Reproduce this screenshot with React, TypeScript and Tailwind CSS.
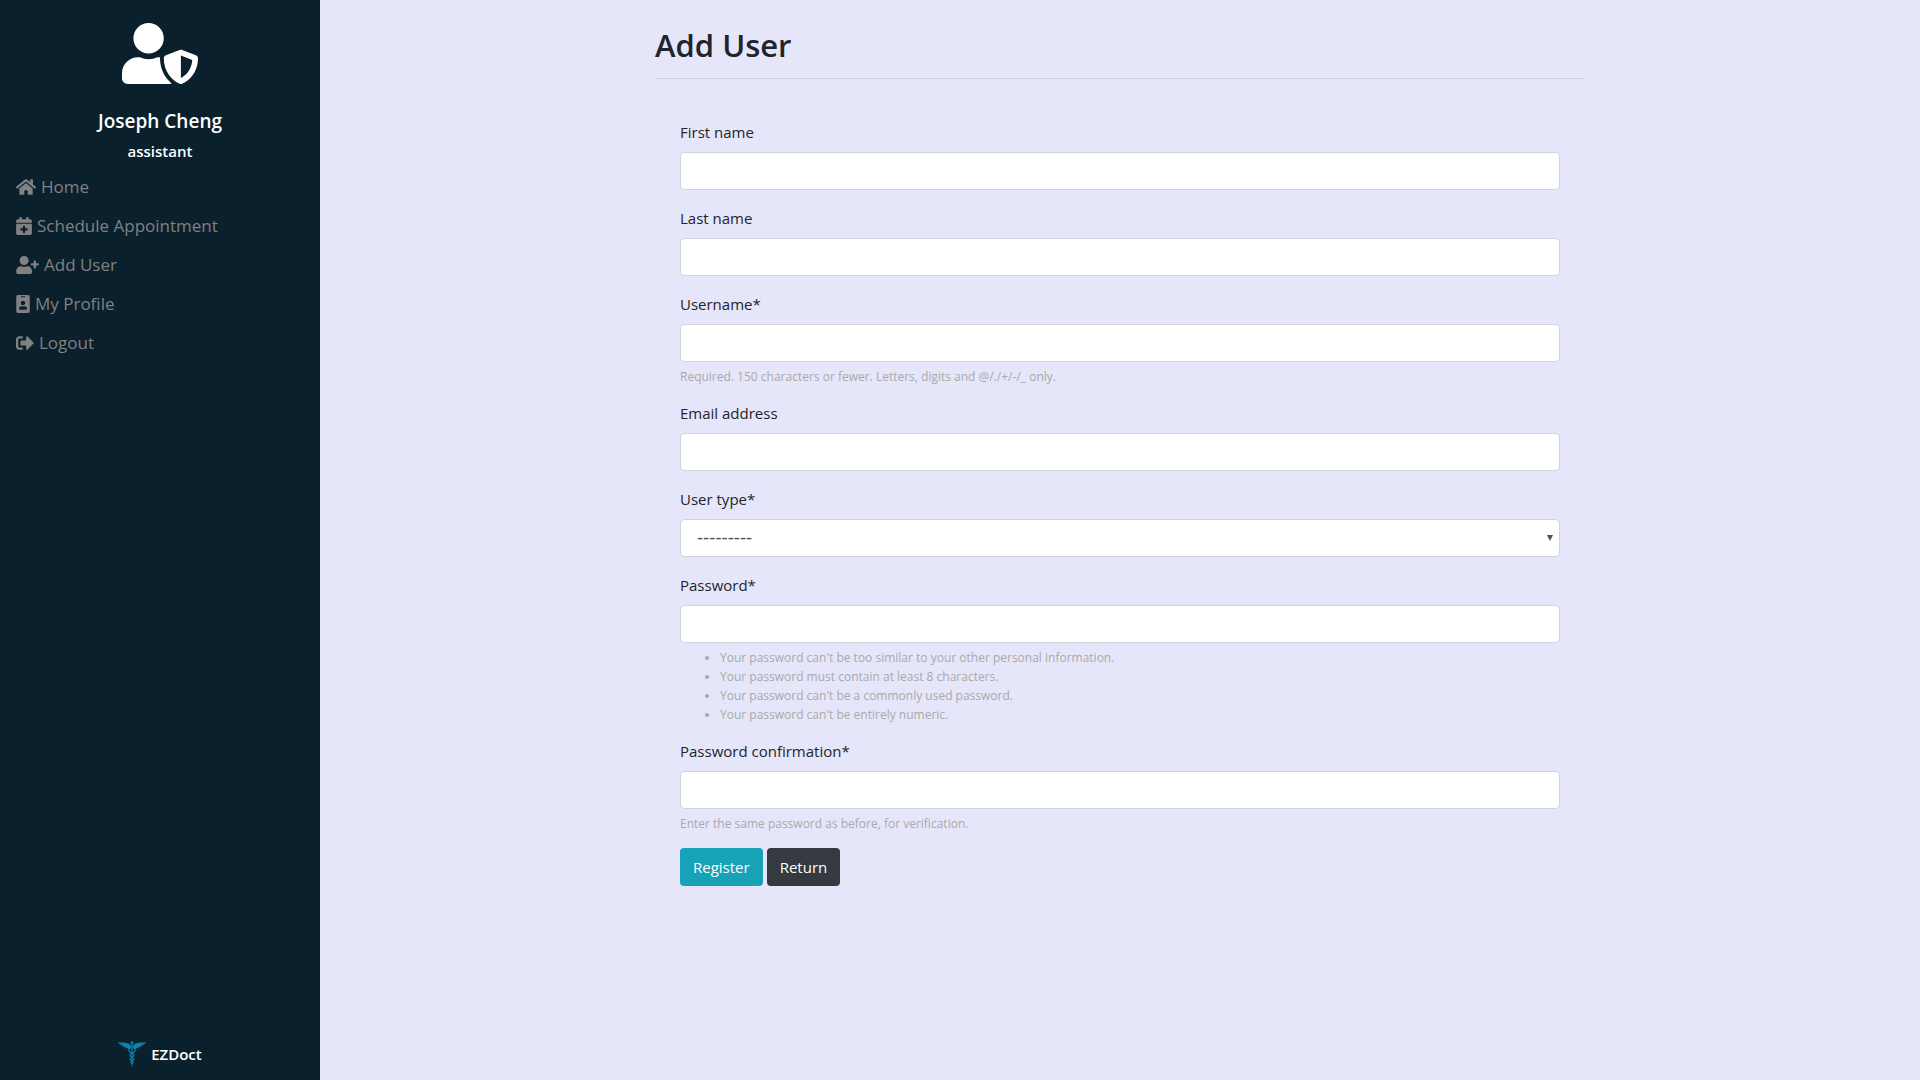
import React from "react";
import { FaUserShield, FaHome, FaCalendarPlus, FaUserPlus, FaIdBadge, FaSignOutAlt } from "react-icons/fa";

const navItems = [
  { label: "Home", icon: <FaHome className="h-[18px] w-[20px]" /> },
  { label: "Schedule Appointment", icon: <FaCalendarPlus className="h-[18px] w-[16px]" /> },
  { label: "Add User", icon: <FaUserPlus className="h-[18px] w-[23px]" /> },
  { label: "My Profile", icon: <FaIdBadge className="h-[18px] w-[14px]" /> },
  { label: "Logout", icon: <FaSignOutAlt className="h-[18px] w-[18px]" /> },
];

const control = "block h-[38px] w-full rounded border border-[#ced4da] bg-white";

function Caduceus() {
  return (
    <svg viewBox="0 0 28 26" className="h-[26px] w-7" aria-hidden="true">
      <g fill="#1380b0">
        <circle cx="14" cy="1.6" r="1.4" />
        <path d="M13.3 2h1.4l-.3 23.4h-.8z" />
        <path d="M0 1.2c4 .2 8 .3 10.600 1.300 1.500.6 2 1.700 2.600 2.700l-.5 2.300c-1 .6-2 .7-3.200.5l.2-.9-2.200.1.2-1-2.300-.2.300-.9-2.200-.4.300-.8C2 3.400 1 2.500 0 1.200z" />
        <path d="M28 1.200c-4 .2-8 .3-10.600 1.300-1.500.6-2 1.700-2.600 2.700l.5 2.300c1 .6 2 .7 3.200.5l-.2-.9 2.200.1-.2-1 2.300-.2-.3-.9 2.200-.4-.3-.8C26 3.400 27 2.500 28 1.200z" />
      </g>
      <g fill="none" stroke="#1380b0" strokeWidth="1.200">
        <path d="M11.500 7.500c-2 2.500.5 3.700 2.500 4.700s3.500 2.300 0 4.300-1.800 2.700 0 3.700 1 1.800 0 2.300" />
        <path d="M16.500 7.500c2 2.500-.5 3.700-2.500 4.700s-3.500 2.300 0 4.300 1.800 2.700 0 3.700-1 1.800 0 2.300" />
      </g>
    </svg>
  );
}

function Field({ id, label, help, children }: { id: string; label: string; help?: React.ReactNode; children?: React.ReactNode }) {
  return (
    <div className="mb-4">
      <label htmlFor={id} className="mb-2 block text-[15px] leading-6">{label}</label>
      {children ?? <input id={id} type={id.startsWith("password") ? "password" : "text"} className={`${control} px-3 text-[15px] text-[#495057]`} />}
      {help && <div className="pt-[5px] text-xs leading-[19px] text-[#a9a9a9] -mb-px">{help}</div>}
    </div>
  );
}

export default function App() {
  return (
    <div className="flex min-h-screen bg-[#e6e6fa] font-['Open_Sans',sans-serif] text-[#212529]">
      <aside className="flex w-1/6 shrink-0 flex-col bg-[#0a202d]">
        <div className="flex flex-col items-center pt-[23px] text-white">
          <FaUserShield className="h-[61px] w-[76px]" />
          <h2 className="mt-[25px] text-[19px] leading-6 font-semibold">Joseph Cheng</h2>
          <h3 className="mt-2 text-[15px] leading-5 font-semibold">assistant</h3>
        </div>
        <nav className="mt-3 flex flex-col gap-3 px-4">
          {navItems.map((item) => (
            <a key={item.label} href="#" className="flex items-center gap-[5px] text-[17px] leading-[27px] text-[#818181]">
              {item.icon}
              {item.label}
            </a>
          ))}
        </nav>
        <footer className="mt-auto flex items-center justify-center gap-[5px] pb-3 text-[15px] leading-7 font-semibold text-white">
          <Caduceus />
          EZDoct
        </footer>
      </aside>
      <main className="flex-1 px-4">
        <div className="mx-auto max-w-[930px] pt-[26px]">
          <h1 className="border-b border-[#cecee1] pb-[14px] text-[31px] leading-[38px] font-semibold">Add User</h1>
          <form className="px-[25px] pt-[41px]">
            <Field id="first-name" label="First name" />
            <Field id="last-name" label="Last name" />
            <Field id="username" label="Username*" help="Required. 150 characters or fewer. Letters, digits and @/./+/-/_ only." />
            <Field id="email" label="Email address" />
            <Field id="user-type" label="User type*">
              <div className="relative">
                <select id="user-type" className={`${control} appearance-none pl-4 font-['DejaVu_Sans',sans-serif] text-[17px] text-[#495057]`}>
                  <option>---------</option>
                </select>
                <svg viewBox="0 0 6 6" className="pointer-events-none absolute top-4 right-[7px] size-[6px]" aria-hidden="true">
                  <path d="M0 0h6L3 6z" fill="#495057" />
                </svg>
              </div>
            </Field>
            <Field
              id="password"
              label="Password*"
              help={
                <ul className="list-disc pl-10">
                  <li>Your password can't be too similar to your other personal information.</li>
                  <li>Your password must contain at least 8 characters.</li>
                  <li>Your password can't be a commonly used password.</li>
                  <li>Your password can't be entirely numeric.</li>
                </ul>
              }
            />
            <Field id="password-confirmation" label="Password confirmation*" help="Enter the same password as before, for verification." />
            <div className="flex gap-1 text-[15px] text-white">
              <button type="submit" className="h-[38px] rounded bg-[#17a2b8] px-[13px]">Register</button>
              <button type="button" className="h-[38px] rounded bg-[#343a40] px-[13px]">Return</button>
            </div>
          </form>
        </div>
      </main>
    </div>
  );
}
